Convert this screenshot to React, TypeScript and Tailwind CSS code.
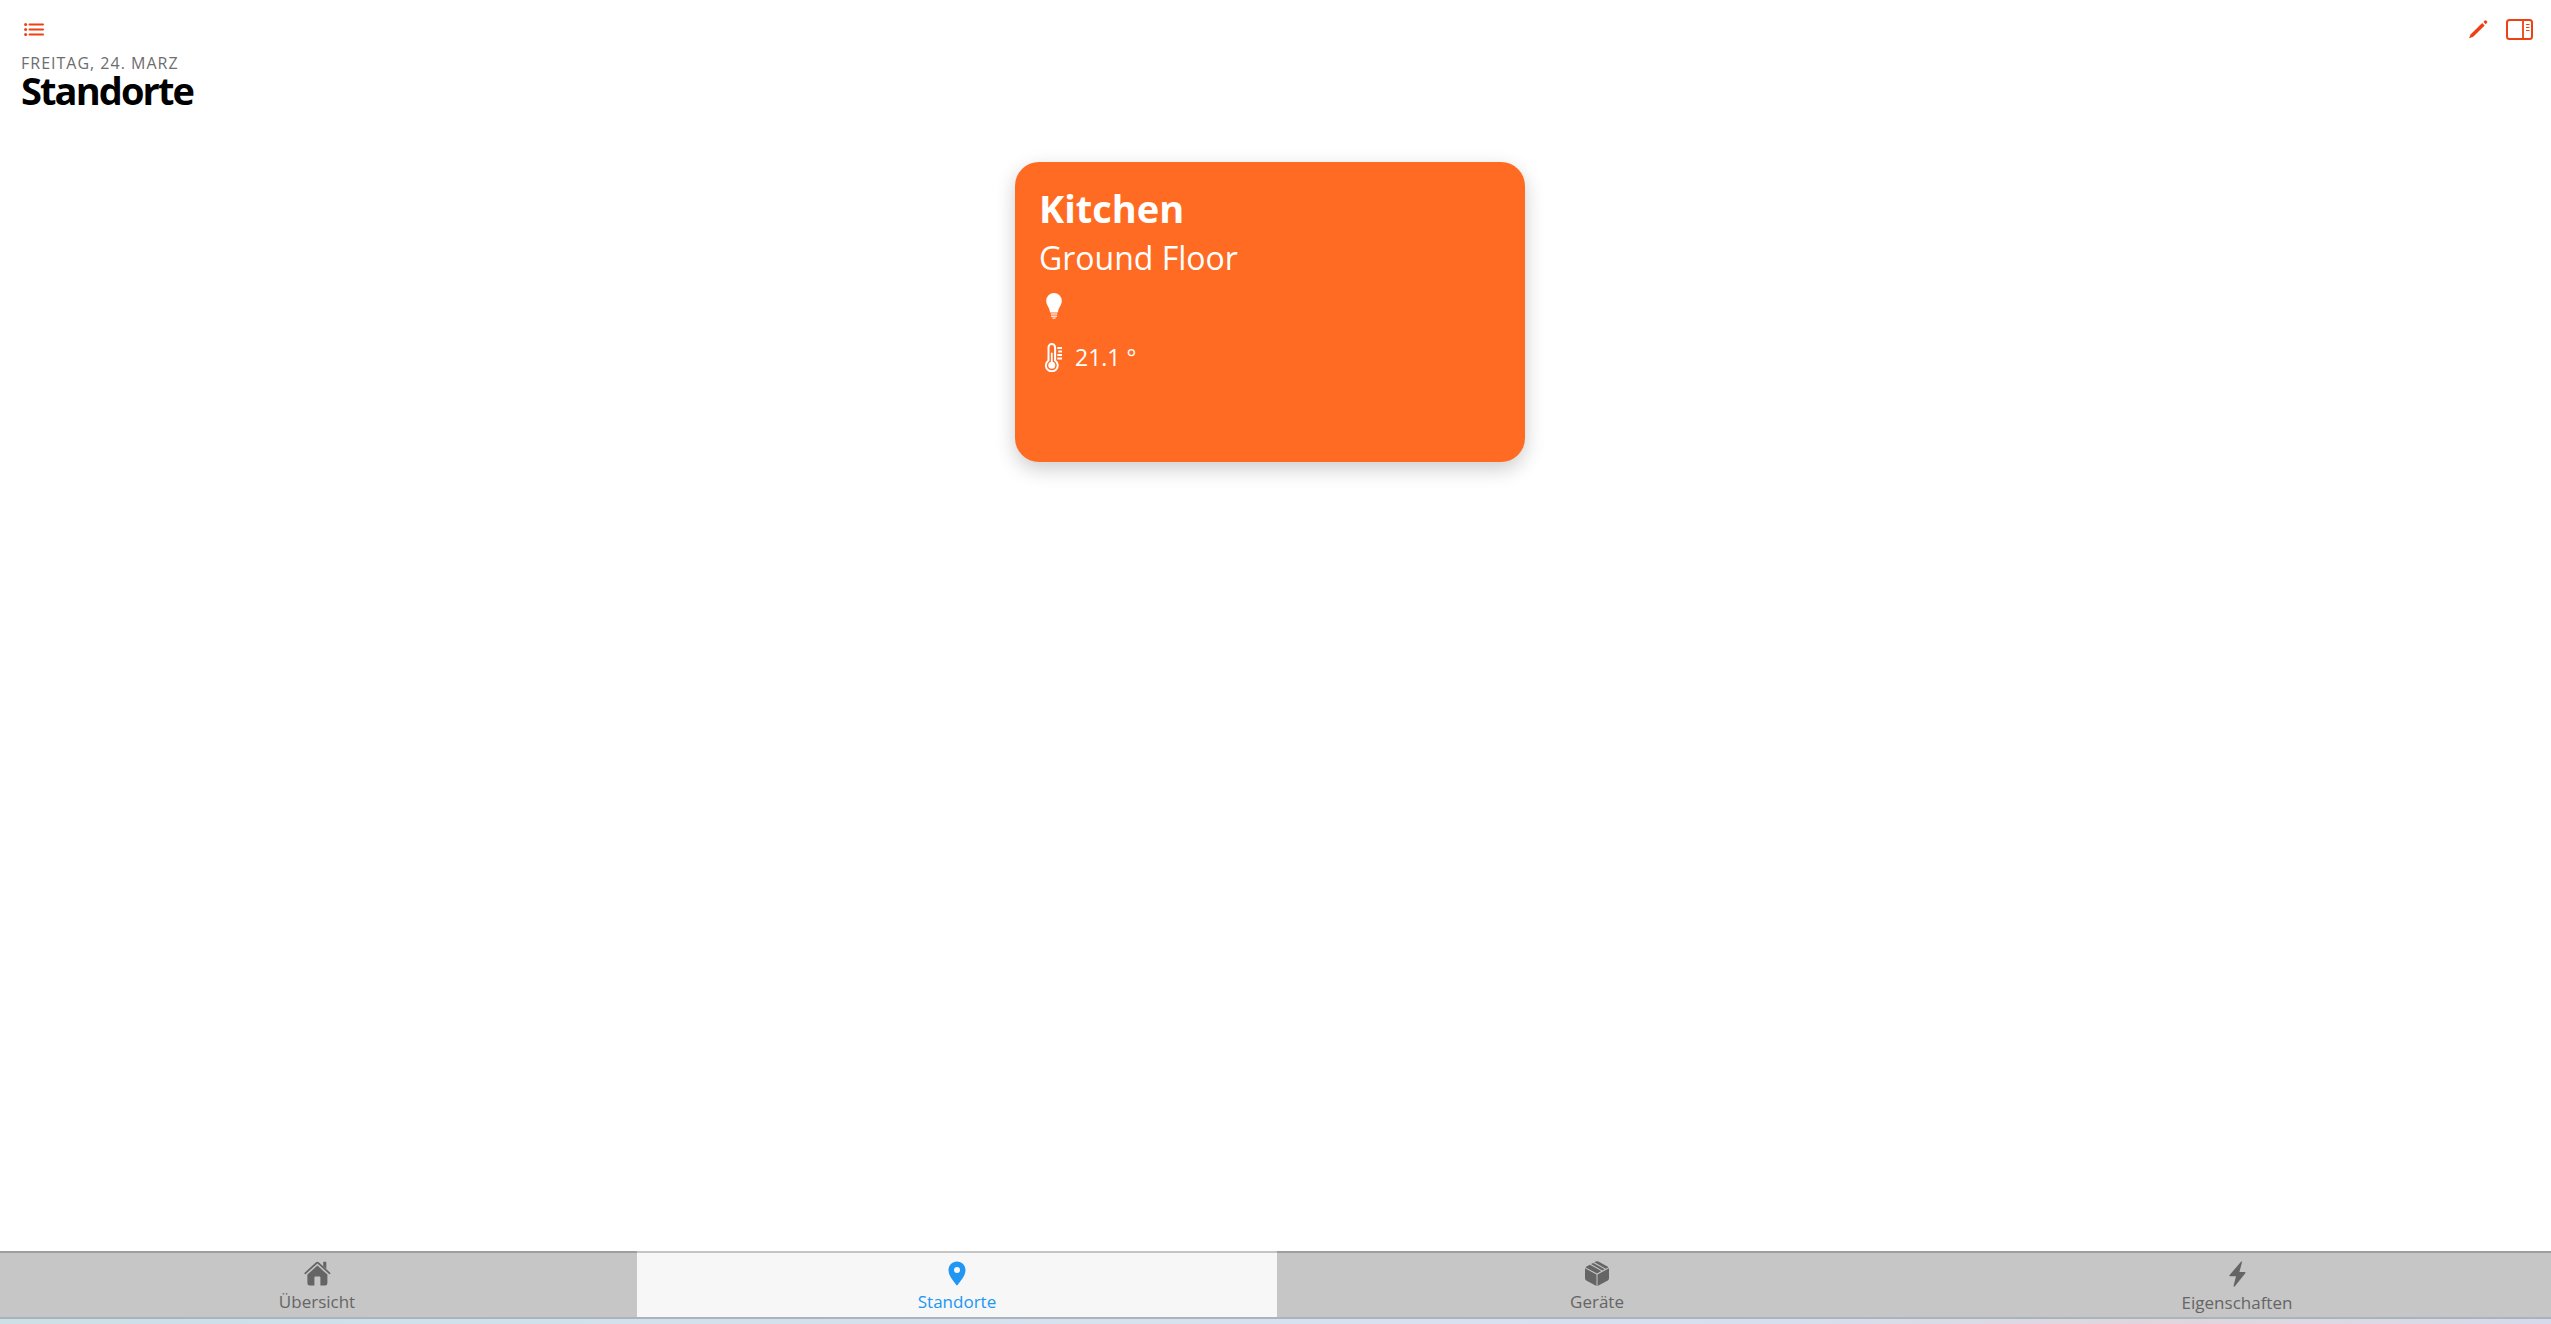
import React from "react";

function ListIcon() {
  return (
    <svg width="20" height="13" viewBox="0 0 20 13" fill="currentColor" aria-hidden="true">
      {[1.5, 6.5, 11.5].map((y) => (
        <g key={y}>
          <circle cx="1.6" cy={y} r="1.5" />
          <rect x="4.5" y={y - 1} width="15.5" height="2" rx="1" />
        </g>
      ))}
    </svg>
  );
}

function PencilIcon() {
  return (
    <svg width="19" height="19" viewBox="0 0 19 19" fill="currentColor" aria-hidden="true">
      <path d="M0.3 17.6 1.5 14.4 13.2 2.9 15.7 5.4 4.2 16.8 0.9 18.1Q.1 18.3.3 17.6Z" />
      <path d="M14.3 1.9 15.8.6Q16.500.1 17.100.6L18.100 1.600Q18.600 2.200 18.100 2.800L16.800 4.300Z" />
    </svg>
  );
}

function PanelIcon() {
  return (
    <svg width="27" height="21" viewBox="0 0 27 21" fill="none" stroke="currentColor" aria-hidden="true">
      <rect x="1" y="1" width="25" height="19" rx="2.5" strokeWidth="2" />
      <path d="M17 1V20" strokeWidth="1.8" />
      <path d="M20 5.500H23.500M20 8.500H23.500M20 11.500H23.500" strokeWidth="1.2" />
    </svg>
  );
}

function BulbIcon() {
  return (
    <svg width="16" height="26" viewBox="0 0 16 26" fill="currentColor" aria-hidden="true">
      <path d="M8 0A7.8 7.8 0 0 1 15.8 7.8C15.8 12 12.6 14.4 12 19Q11.9 19.5 11.4 19.5H4.6Q4.1 19.5 4 19C3.4 14.4.2 12 .2 7.8A7.8 7.8 0 0 1 8 0Z" />
      <path d="M4.9 20.3H11.1V21.7H4.9ZM4.9 22.4H11.1V23.6Q10.6 24.2 10 24.2H6Q5.4 24.2 4.9 23.6ZM6 24.7H10Q9.4 26 8 26T6 24.7Z" opacity=".75" />
    </svg>
  );
}

function ThermometerIcon() {
  return (
    <svg width="18" height="29" viewBox="0 0 18 29" fill="none" stroke="currentColor" aria-hidden="true">
      <path d="M3.5 17.5V4.4A3.3 3.3 0 0 1 10.1 4.4V17.5A5.9 5.9 0 1 1 3.5 17.5Z" strokeWidth="2" strokeLinejoin="round" />
      <path d="M6.8 10.5V21" strokeWidth="1.8" strokeLinecap="round" />
      <circle cx="6.8" cy="22.2" r="3.5" fill="currentColor" stroke="none" />
      <path d="M12.3 5H17M13.3 8.5H17M12.3 12H17M12.3 15.5H17" strokeWidth="1.8" />
    </svg>
  );
}

function HomeIcon() {
  return (
    <svg width="27" height="25" viewBox="0 0 27 25" fill="currentColor" aria-hidden="true">
      <path d="M19.2 5.2V1.5Q19.2.8 19.9.8H21.6Q22.3.8 22.3 1.5V8Z" />
      <path d="M1.2 12.3 12.6 2Q13.4 1.3 14.2 2L25.6 12.3" fill="none" stroke="currentColor" strokeWidth="1.7" strokeLinecap="round" strokeLinejoin="round" />
      <path d="M13.4 4.6 23.4 13.6V22.3Q23.4 24.6 21.1 24.6H16.4V16.5Q16.4 15.6 15.5 15.6H11.3Q10.4 15.6 10.4 16.5V24.6H5.7Q3.4 24.6 3.4 22.3V13.6Z" />
    </svg>
  );
}

function PinIcon() {
  return (
    <svg width="18" height="25" viewBox="0 0 18 25" fill="currentColor" aria-hidden="true">
      <path fillRule="evenodd" d="M9 .5C4.1.5.5 4.2.5 9 .5 15 6 20.5 8.3 23.9Q9 24.8 9.7 23.9C12 20.5 17.5 15 17.5 9 17.5 4.2 13.9.5 9 .5ZM9 6A3 3 0 1 1 9 12 3 3 0 0 1 9 6Z" />
    </svg>
  );
}

function CubeIcon() {
  return (
    <svg width="24" height="25" viewBox="0 0 24 25" fill="currentColor" aria-hidden="true">
      <path d="M0 7.3 11.5 13.5V25L1.2 19.4Q0 18.7 0 17.5ZM24 7.3V17.5Q24 18.7 22.8 19.4L12.5 25V13.5Z" />
      <path d="M.6 6.4Q1.1 5.7 2 5.2L4.9 3.7 16.3 10.1 12 12.5ZM6 3.1 8.3 1.9 19.7 8.3 17.4 9.5ZM9.4 1.3 10.7.6Q12 0 13.3.6L22 5.2Q22.9 5.7 23.4 6.4L20.8 7.7Z" />
    </svg>
  );
}

function BoltIcon() {
  return (
    <svg width="17" height="26" viewBox="0 0 17 26" fill="currentColor" aria-hidden="true">
      <path d="M12.2.5Q13.2.1 13 1.2L10.4 11H15.7Q17 11.1 16.3 12.2L5.9 25.2Q4.8 26.2 4.5 24.9L7 15.3H1.2Q0 15.2.6 14.1Z" />
    </svg>
  );
}

const tabs = [
  { label: "Übersicht", icon: <HomeIcon />, active: false },
  { label: "Standorte", icon: <PinIcon />, active: true },
  { label: "Geräte", icon: <CubeIcon />, active: false },
  { label: "Eigenschaften", icon: <BoltIcon />, active: false },
];

export default function App() {
  return (
    <div className="flex min-h-screen flex-col overflow-hidden bg-white font-['Open_Sans',sans-serif]">
      <header className="pt-[11px]">
        <div className="flex h-9 items-center justify-between pr-[18px] pl-6 text-[#ee4113]">
          <button type="button" aria-label="Menü">
            <ListIcon />
          </button>
          <div className="flex items-center gap-[18px]">
            <button type="button" aria-label="Bearbeiten">
              <PencilIcon />
            </button>
            <button type="button" aria-label="Seitenleiste">
              <PanelIcon />
            </button>
          </div>
        </div>
        <div className="px-[21px] pt-1.5">
          <p className="text-base leading-5 tracking-[1px] text-[#6d6d6d] uppercase">Freitag, 24. Marz</p>
          <h1 className="text-[38px] leading-[34px] font-bold tracking-tighter text-black">Standorte</h1>
        </div>
      </header>

      <main className="flex flex-1 justify-center pt-[55px] pr-[11px]">
        <a
          href="#kitchen"
          className="flex h-[300px] w-[510px] max-w-full flex-col rounded-3xl bg-[#ff6b22] px-6 pt-[22px] text-white shadow-[0_7px_20px_rgba(0,0,0,0.2)]"
        >
          <h2 className="text-[38px] leading-12 font-bold">Kitchen</h2>
          <p className="pt-0.5 text-[32px] leading-12">Ground Floor</p>
          <div className="flex h-12 items-center pl-[7px]">
            <BulbIcon />
          </div>
          <div className="flex h-[54px] items-center gap-3 pl-[6px] text-[23px]">
            <ThermometerIcon />
            <span>21.1 °</span>
          </div>
        </a>
      </main>

      <nav className="-mr-[6px] -ml-[3px] grid grid-cols-4">
        {tabs.map((tab) => (
          <a
            key={tab.label}
            href={`#${tab.label}`}
            aria-current={tab.active ? "page" : undefined}
            className={
              tab.active
                ? "flex h-[66px] flex-col items-center border-t-2 border-[#c5c5c5] bg-[#f7f7f7] pt-2 text-[#2196f3]"
                : "flex h-[66px] flex-col items-center border-t-2 border-[#9e9e9e] bg-[#c6c6c6] pt-2 text-[#656565]"
            }
          >
            <span className="flex h-[26px] items-center">{tab.icon}</span>
            <span className="text-[17px] leading-8">{tab.label}</span>
          </a>
        ))}
      </nav>
      <footer className="h-[7px] border-t-2 border-[#aab4be] bg-linear-to-r from-[#cce0e6] from-0% via-[#d8e2ee] via-50% to-[#d8daea] to-100%">
        <div className="ml-auto h-full w-[30%] bg-linear-to-r from-transparent via-[#e0d6dc] to-transparent" />
      </footer>
    </div>
  );
}
